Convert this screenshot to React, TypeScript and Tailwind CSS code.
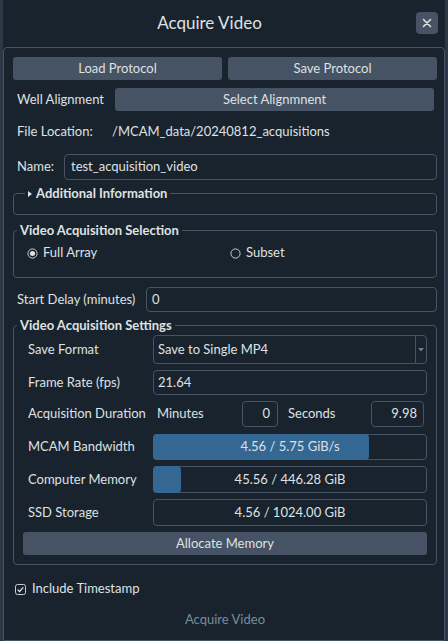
import React from 'react'

function GroupBox({ title, legendClass, children }: { title: React.ReactNode; legendClass: string; children: React.ReactNode }) {
  return (
    <fieldset className="border border-[#455364] rounded-[4px]">
      <legend className={`font-bold leading-[17px] ${legendClass}`}>{title}</legend>
      {children}
    </fieldset>
  )
}

function Radio({ checked, label }: { checked: boolean; label: string }) {
  return (
    <div className="flex items-center gap-[5px]">
      <svg width="11" height="11" viewBox="0 0 11 11">
        <circle cx="5.5" cy="5.5" r="4.6" fill="none" stroke="#c9cdd0" strokeWidth="1" />
        {checked && <circle cx="5.5" cy="5.5" r="2.6" fill="#dfe1e2" />}
      </svg>
      <span>{label}</span>
    </div>
  )
}

function Bar({ value, max, unit }: { value: number; max: number; unit: string }) {
  const pct = (value / max) * 100
  return (
    <div className="relative flex-1 h-full border border-[#455364] rounded-[4px] flex items-center justify-center">
      {pct >= 1 && (
        <div className="absolute left-[-1px] top-[-1px] bottom-[-1px] bg-[#346792] rounded-[4px]" style={{ width: `${pct}%` }} />
      )}
      <span className="relative">
        {value.toFixed(2)} / {max.toFixed(2)} {unit}
      </span>
    </div>
  )
}

export default function App() {
  return (
    <div className="w-[448px] h-[641px] bg-[#19232d] border-x-[3px] border-[#2b3946] flex flex-col text-[13px] text-[#dfe1e2] font-['Lato',sans-serif] overflow-hidden">
      {/* title bar */}
      <div className="h-[47px] shrink-0 flex items-center pr-[7px]">
        <div className="flex-1 text-center text-[17px] pb-[1px]">Acquire Video</div>
        <button className="w-[22px] h-[22px] mb-[1px] bg-[#455364] rounded-[4px] flex items-center justify-center">
          <svg width="10" height="10" viewBox="0 0 10 10">
            <path d="M1.5 1.5 L8.5 8.5 M8.5 1.5 L1.5 8.5" stroke="#dfe1e2" strokeWidth="1.6" strokeLinecap="round" />
          </svg>
        </button>
      </div>

      <div className="flex-1 border border-[#455364] rounded-t-[4px] pl-[9px] pr-[7px] pt-[9px] flex flex-col">
        <div className="grid grid-cols-2 gap-[6px] h-[23px]">
          <button className="bg-[#455364] rounded-[3px]">Load Protocol</button>
          <button className="bg-[#455364] rounded-[3px]">Save Protocol</button>
        </div>

        <div className="flex items-center h-[23px] mt-[8px]">
          <span className="w-[102px] pl-[4px]">Well Alignment</span>
          <button className="flex-1 h-full mr-[3px] bg-[#455364] rounded-[3px]">Select Alignmnent</button>
        </div>

        <div className="flex items-center h-[26px] mt-[8px]">
          <span className="w-[99px] pl-[4px]">File Location:</span>
          <span>/MCAM_data/20240812_acquisitions</span>
        </div>

        <div className="flex items-center h-[26px] mt-[9px]">
          <span className="w-[51px] pl-[4px]">Name:</span>
          <div className="flex-1 h-full border border-[#455364] rounded-[4px] flex items-center px-[6px]">test_acquisition_video</div>
        </div>

        <div className="mt-[5px]">
          <GroupBox
            legendClass="ml-[11px] px-[3px]"
            title={
              <span className="flex items-center gap-[4px]">
                <svg width="4" height="6" viewBox="0 0 4 6">
                  <path d="M0 0 L4 3 L0 6 Z" fill="#dfe1e2" />
                </svg>
                Additional Information
              </span>
            }
          >
            <div className="h-[12px]" />
          </GroupBox>
        </div>

        <div className="mt-[7px]">
          <GroupBox legendClass="ml-[3px] px-[3px]" title="Video Acquisition Selection">
            <div className="grid grid-cols-2 pl-[13px] pr-[3px] pt-[4px] pb-[14px] h-[38px]">
              <Radio checked label="Full Array" />
              <Radio checked={false} label="Subset" />
            </div>
          </GroupBox>
        </div>

        <div className="flex items-center h-[25px] mt-[9px]">
          <span className="w-[133px] pl-[4px]">Start Delay (minutes)</span>
          <div className="flex-1 h-full border border-[#455364] rounded-[4px] flex items-center px-[5px]">0</div>
        </div>

        <div className="mt-[5px]">
          <GroupBox legendClass="ml-[3px] px-[3px]" title="Video Acquisition Settings">
            <div className="flex flex-col gap-[6px] px-[9px] pt-[1px] pb-[9px]">
              <div className="flex items-center h-[29px]">
                <span className="w-[130px] pl-[5px]">Save Format</span>
                <div className="flex-1 h-full border border-[#455364] rounded-[4px] flex items-center">
                  <span className="flex-1 pl-[4px]">Save to Single MP4</span>
                  <div className="w-[11px] h-full border-l border-[#455364] flex items-center justify-center">
                    <svg width="6" height="4" viewBox="0 0 6 4">
                      <path d="M0 0 L6 0 L3 3.5 Z" fill="#6b7c8a" />
                    </svg>
                  </div>
                </div>
              </div>

              <div className="flex items-center h-[25px]">
                <span className="w-[130px] pl-[5px]">Frame Rate (fps)</span>
                <div className="flex-1 h-full border border-[#455364] rounded-[4px] flex items-center px-[4px]">21.64</div>
              </div>

              <div className="flex items-center h-[26px]">
                <span className="w-[130px] pl-[5px]">Acquisition Duration</span>
                <span className="w-[89px] pl-[4px]">Minutes</span>
                <div className="w-[36px] h-full border border-[#455364] rounded-[4px] flex items-center justify-end px-[7px]">0</div>
                <span className="w-[93px] pl-[10px]">Seconds</span>
                <div className="w-[53px] h-full border border-[#455364] rounded-[4px] flex items-center justify-end px-[6px]">9.98</div>
              </div>

              <div className="flex items-center h-[26px] mt-[1px]">
                <span className="w-[130px] pl-[5px]">MCAM Bandwidth</span>
                <Bar value={4.56} max={5.75} unit="GiB/s" />
              </div>

              <div className="flex items-center h-[27px]">
                <span className="w-[130px] pl-[5px]">Computer Memory</span>
                <Bar value={45.56} max={446.28} unit="GiB" />
              </div>

              <div className="flex items-center h-[27px]">
                <span className="w-[130px] pl-[5px]">SSD Storage</span>
                <Bar value={4.56} max={1024} unit="GiB" />
              </div>

              <button className="h-[23px] bg-[#455364] rounded-[3px]">Allocate Memory</button>
            </div>
          </GroupBox>
        </div>

        <div className="flex items-center gap-[6px] h-[20px] mt-[14px] ml-[2px]">
          <svg width="11" height="11" viewBox="0 0 11 11">
            <rect x="0.5" y="0.5" width="10" height="10" rx="2" fill="none" stroke="#c9cdd0" strokeWidth="1" />
            <path d="M2.7 5.6 L4.6 7.5 L8.3 3.4" fill="none" stroke="#dfe1e2" strokeWidth="1.3" />
          </svg>
          <span>Include Timestamp</span>
        </div>

        <div className="h-[20px] mt-[11px] flex items-center justify-center text-[#788d9c]">Acquire Video</div>
      </div>
    </div>
  )
}
